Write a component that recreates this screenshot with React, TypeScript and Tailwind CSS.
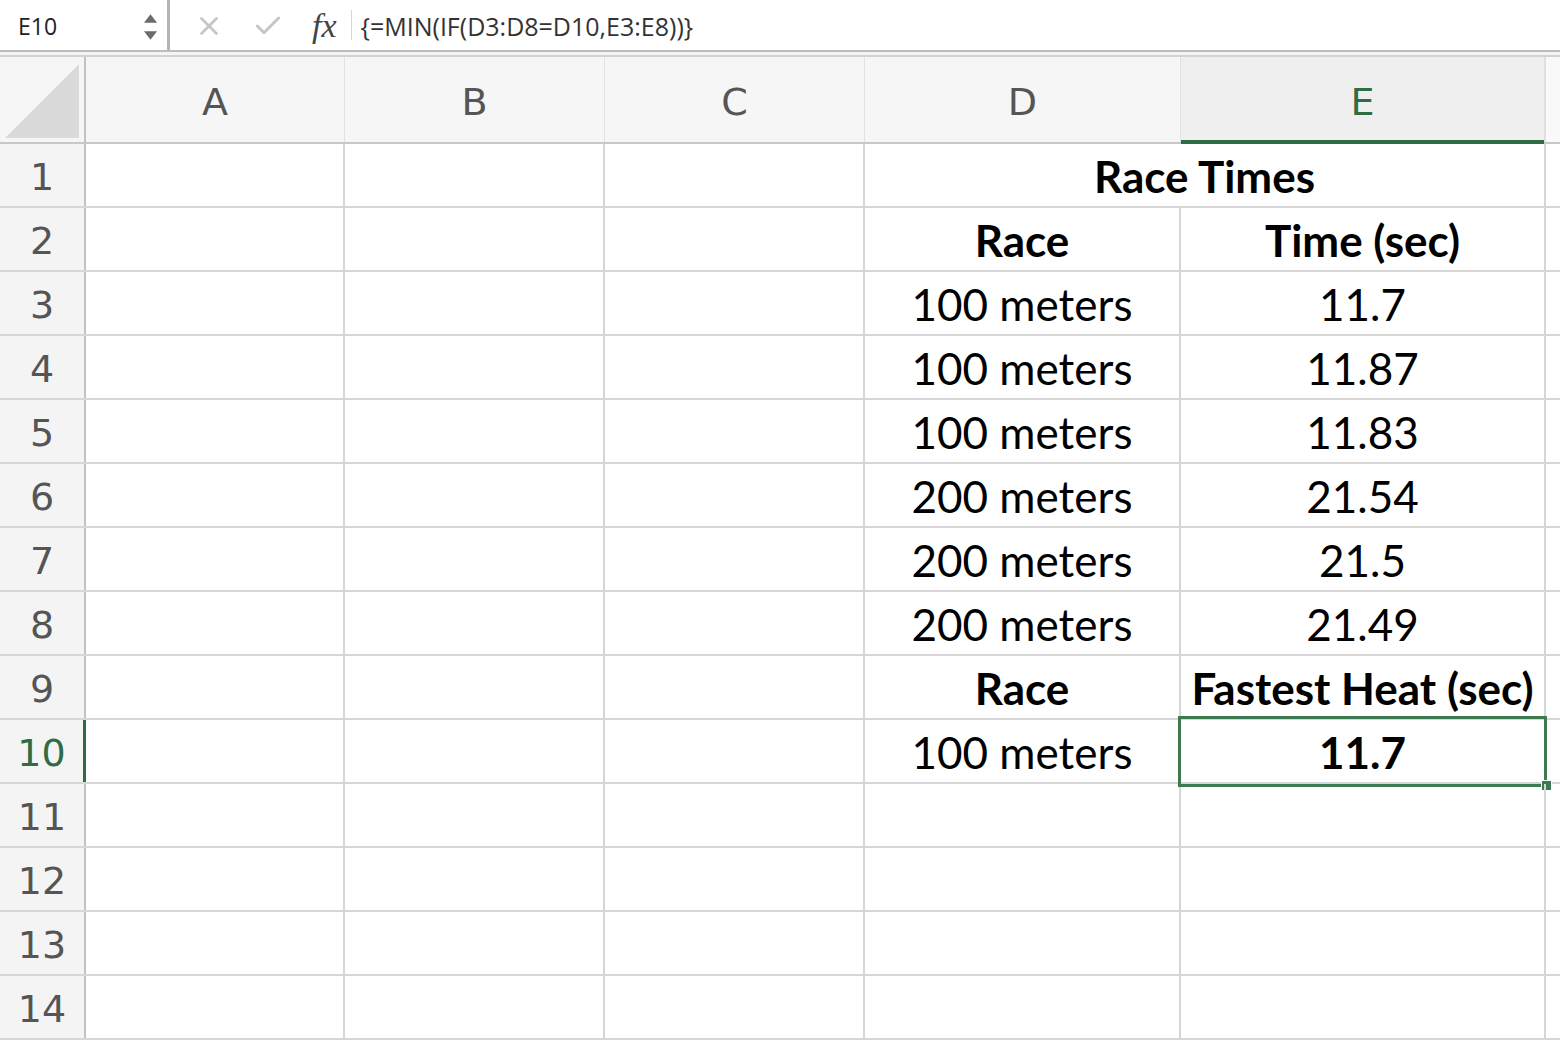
import { X, Check } from 'lucide-react'

const rows: { d?: string; e?: string; bold?: boolean; merged?: string }[] = [
  { merged: 'Race Times' },
  { d: 'Race', e: 'Time (sec)', bold: true },
  { d: '100 meters', e: '11.7' },
  { d: '100 meters', e: '11.87' },
  { d: '100 meters', e: '11.83' },
  { d: '200 meters', e: '21.54' },
  { d: '200 meters', e: '21.5' },
  { d: '200 meters', e: '21.49' },
  { d: 'Race', e: 'Fastest Heat (sec)', bold: true },
  { d: '100 meters', e: '11.7' },
  {},
  {},
  {},
  {},
]

const cellFont = "font-['Lato',sans-serif] text-[44px] text-black"
const hdrFont = "font-['DejaVu_Sans',sans-serif] text-[38px]"

function FormulaBar() {
  return (
    <div className="flex flex-col">
      <div className="flex h-[50px] items-center bg-white">
        <div className="flex h-full w-[170px] items-center justify-between border-r-[3px] border-[#b5b5b5] pl-[18px] pr-[10px] pt-[3px]">
          <span className="font-['Open_Sans',sans-serif] text-[23px] text-[#222]">E10</span>
          <div className="flex flex-col items-center gap-[8px]">
            <svg width="13" height="9" viewBox="0 0 12 8">
              <path d="M6 0 L12 8 L0 8 Z" fill="#6b6b6b" />
            </svg>
            <svg width="13" height="9" viewBox="0 0 12 8">
              <path d="M0 0 L12 0 L6 8 Z" fill="#6b6b6b" />
            </svg>
          </div>
        </div>
        <div className="ml-[24px] flex items-center gap-[28px] pt-[2px] text-[#c6c6c6]">
          <X size={30} strokeWidth={2.2} />
          <Check size={32} strokeWidth={2.2} />
        </div>
        <span className="ml-[28px] pt-[1px] font-['Liberation_Serif',serif] text-[34px] italic text-[#444]">fx</span>
        <div className="ml-[14px] h-[30px] w-[1px] bg-[#d6d6d6]" />
        <span className="ml-[9px] pt-[3px] font-['Open_Sans',sans-serif] text-[25px] text-[#333]">
          {'{=MIN(IF(D3:D8=D10,E3:E8))}'}
        </span>
      </div>
      <div className="h-[2px] bg-[#bdbdbd]" />
      <div className="h-[3px] bg-[#f4f4f4]" />
      <div className="h-[2px] bg-[#d2d2d2]" />
    </div>
  )
}

function HeaderRow() {
  const cols: { l: string; w: string }[] = [
    { l: 'A', w: 'w-[259px]' },
    { l: 'B', w: 'w-[260px]' },
    { l: 'C', w: 'w-[260px]' },
    { l: 'D', w: 'w-[316px]' },
  ]
  return (
    <div className="flex h-[87px] border-b-2 border-[#c8c8c8] bg-[#f6f6f6]">
      <div className="flex w-[86px] items-end justify-end border-r-2 border-[#c2c2c2] pb-[4px] pr-[5px]">
        <svg width="74" height="74" viewBox="0 0 74 74">
          <path d="M0 74 L74 74 L74 0 Z" fill="#dadada" />
        </svg>
      </div>
      {cols.map((c) => (
        <div
          key={c.l}
          className={`${c.w} flex items-center justify-center border-r border-[#e2e2e2] pt-[5px] ${hdrFont} text-[#555]`}
        >
          {c.l}
        </div>
      ))}
      <div className="relative flex w-[365px] items-center justify-center border-r-2 border-[#e0e0e0] bg-[#efefef] pt-[5px]">
        <span className={`${hdrFont} font-medium text-[#2f6c44]`}>E</span>
        <div className="absolute -bottom-[2px] left-0 right-0 h-[4px] bg-[#2f6c44]" />
      </div>
      <div className="flex-1 bg-[#f9f9f9]" />
    </div>
  )
}

function Row({ n, r }: { n: number; r: (typeof rows)[number] }) {
  const sel = n === 10
  const weight = r.bold ? 'font-bold' : ''
  return (
    <div className="flex h-[64px] border-b-2 border-[#d6d6d6]">
      <div
        className={`flex w-[86px] items-center justify-center bg-[#f4f4f4] pt-[5px] ${hdrFont} ${
          sel ? 'border-r-[3px] border-[#2f6c44] text-[#2f6c44]' : 'border-r-2 border-[#c2c2c2] text-[#555]'
        }`}
      >
        {n}
      </div>
      <div className="w-[259px] border-r-2 border-[#d6d6d6]" />
      <div className="w-[260px] border-r-2 border-[#d6d6d6]" />
      <div className="w-[260px] border-r-2 border-[#d6d6d6]" />
      {r.merged ? (
        <div className={`flex w-[681px] items-center justify-center border-r-2 border-[#d6d6d6] pt-[2px] font-bold ${cellFont}`}>
          {r.merged}
        </div>
      ) : (
        <>
          <div className={`flex w-[316px] items-center justify-center border-r-2 border-[#d6d6d6] pt-[2px] ${weight} ${cellFont}`}>
            {r.d}
          </div>
          <div
            className={`relative flex w-[365px] items-center justify-center border-r-2 border-[#d6d6d6] pt-[2px] ${
              sel || r.bold ? 'font-bold' : ''
            } ${cellFont} whitespace-nowrap`}
          >
            {r.e}
            {sel && (
              <>
                <div className="absolute -left-[3px] -top-[4px] -bottom-[5px] -right-[3px] border-[3px] border-[#3d7a50]" />
                <div className="absolute -bottom-[9px] -right-[8px] h-[11px] w-[11px] border border-white bg-[#3d7a50]" />
              </>
            )}
          </div>
        </>
      )}
      <div className="flex-1" />
    </div>
  )
}

export default function App() {
  return (
    <div className="h-[1040px] w-[1560px] overflow-hidden bg-white">
      <FormulaBar />
      <HeaderRow />
      {rows.map((r, i) => (
        <Row key={i} n={i + 1} r={r} />
      ))}
    </div>
  )
}
